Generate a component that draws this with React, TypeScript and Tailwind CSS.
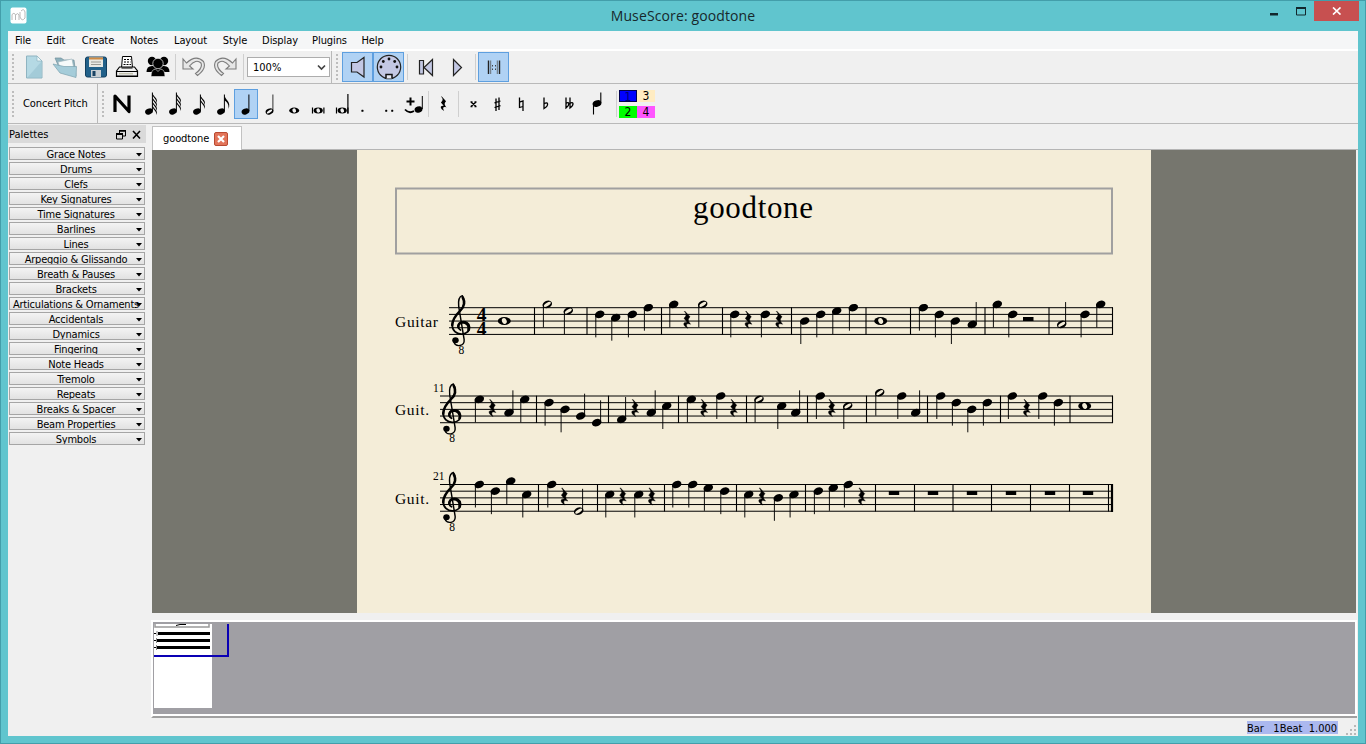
import React from "react";

type Kind = "q" | "h" | "w" | "r";
type Sym = [Kind, number, number?];

interface System {
  top: number;
  left: number;
  label: string;
  labelWidth: number;
  num?: string;
  bars: number[];
  syms: Sym[];
}

const systems: System[] = [
  {
    top: 307.7, left: 449, label: "Guitar", labelWidth: 43,
    bars: [534.5, 587, 661.5, 722.5, 791.5, 866, 910.5, 985, 1049, 1112.5],
    syms: [
      ["w", 504.3, 4], ["h", 547.3, -1], ["h", 568.3, 1],
      ["q", 599.7, 2], ["q", 615.7, 3], ["q", 632.3, 2], ["q", 648.3, 0],
      ["q", 673.7, -1], ["r", 687], ["h", 702.7, -1],
      ["q", 734.7, 2], ["r", 748.3], ["q", 765.3, 2], ["r", 779],
      ["q", 804.7, 4], ["q", 820.7, 2], ["q", 836.7, 1], ["q", 853.3, 0],
      ["w", 880.7, 4],
      ["q", 923.3, 0], ["q", 939.3, 2], ["q", 955.3, 4], ["q", 972.3, 5],
      ["q", 997.3, -1], ["q", 1012.7, 2],
      ["h", 1061.7, 5], ["q", 1085, 2], ["q", 1100.7, -1],
    ],
  },
  {
    top: 396, left: 440, label: "Guit.", labelWidth: 34, num: "11",
    bars: [536.5, 608.5, 678.5, 746.5, 807.5, 866.5, 927.5, 1000.5, 1070, 1112.5],
    syms: [
      ["q", 479.3, 1], ["r", 492.3], ["q", 509, 5], ["q", 524.7, 1],
      ["q", 549, 2], ["q", 565, 4], ["q", 580.7, 6], ["q", 596.7, 8],
      ["q", 621.7, 7], ["r", 635], ["q", 651.3, 5], ["q", 666.7, 3],
      ["q", 691.3, 1], ["r", 704], ["q", 720.7, 0], ["r", 733.7],
      ["h", 759, 1], ["q", 781.7, 3], ["q", 795.7, 5],
      ["q", 820.3, 0], ["r", 831.7], ["h", 847.7, 3],
      ["h", 879.7, -1], ["q", 901.7, 0], ["q", 915.7, 5],
      ["q", 940.7, 0], ["q", 956.3, 2], ["q", 971.7, 4], ["q", 987.3, 2],
      ["q", 1012.3, 0], ["r", 1026.7], ["q", 1042.7, 0], ["q", 1058.3, 2],
      ["w", 1084.7, 3],
    ],
  },
  {
    top: 484.5, left: 440, label: "Guit.", labelWidth: 34, num: "21",
    bars: [538.5, 597.5, 664.5, 736.5, 805.5, 875.5, 914.5, 953, 991.5, 1030.5, 1069.5, 1108.5],
    syms: [
      ["q", 479.3, 0], ["q", 495.3, 2], ["q", 510.7, -1], ["q", 526.7, 3],
      ["q", 551.7, 0], ["r", 564.3], ["h", 578.7, 8],
      ["q", 609.7, 3], ["r", 622.7], ["q", 638.7, 3], ["r", 651.7],
      ["q", 676.7, 0], ["q", 692.7, 0], ["q", 708.3, 1], ["q", 724.7, 2],
      ["q", 748.7, 3], ["r", 762], ["q", 778.3, 4], ["q", 794, 3],
      ["q", 818.3, 2], ["q", 833.3, 1], ["q", 848.3, 0], ["r", 861.7],
    ],
  },
];

const STEP = 3.33;

const REST = "M-2.4 -9.6 L3.2 -3.4 C.8 -.8 .9 .8 3.8 4.4 C.2 3 -2 4.2 .8 8.6 C-4.8 5.6 -4.6 1.6 .2 2.2 L-3.2 -2 C-.4 -4.4 -.4 -6.4 -2.8 -9.2 Z";

function Note({ sym, top }: { sym: Sym; top: number }) {
  const [kind, x, step = 0] = sym;
  if (kind === "r") {
    return <path transform={`translate(${x} ${top + 12.4}) scale(.95)`} d={REST} stroke="#000" strokeWidth=".4" />;
  }
  const y = top + step * STEP;
  if (kind === "w") {
    return (
      <g transform={`translate(${x} ${y})`}>
        <ellipse rx="6.5" ry="4" />
        <ellipse rx="2.3" ry="3" transform="rotate(-25)" fill="#f4edd8" />
      </g>
    );
  }
  const up = step > 4;
  const sx = x + (up ? 3.9 : -3.9);
  return (
    <g>
      <ellipse cx={x} cy={y} rx="4.9" ry="3.6" transform={`rotate(-22 ${x} ${y})`} />
      {kind === "h" && (
        <ellipse cx={x} cy={y} rx="4" ry="1.5" transform={`rotate(-32 ${x} ${y})`} fill="#f4edd8" />
      )}
      <path d={`M${sx} ${y}V${y + (up ? -22.3 : 23)}`} stroke="#000" strokeWidth=".95" />
    </g>
  );
}

function Clef({ x, top }: { x: number; top: number }) {
  return (
    <g transform={`translate(${x - 0.7} ${top - 13}) scale(.36 .3333)`} fill="none" stroke="#000" strokeLinecap="round">
      <path strokeWidth="4" d="M9 143C14 158 39 156 37 134L22 36C20 16 25 5 32 3C40 13 38 32 29 45" />
      <path strokeWidth="7" d="M33 8C41 24 36 38 26 48C13 62 4 74 4 92" />
      <path strokeWidth="5" d="M4 88C3 108 16 119 31 118C46 117 53 107 52 97C51 84 40 79 31 81C19 84 17 100 27 106" />
      <path strokeWidth="7" d="M49 106C53 92 43 83 32 83C24 84 20 91 21 97" />
      <circle cx="13" cy="137" r="9" fill="#000" stroke="none" />
    </g>
  );
}

function Score() {
  return (
    <svg width="794" height="463" viewBox="357 150 794 463" fontFamily="'Liberation Serif', serif" className="block bg-[#f4edd8]">
      <rect x="396" y="188.5" width="716" height="65" fill="none" stroke="#a0a0a0" strokeWidth="2" />
      <text x="693" y="218.3" fontSize="31" textLength="120">goodtone</text>
      {systems.map((s, i) => (
        <g key={i}>
          {[0, 1, 2, 3, 4].map((n) => (
            <path key={n} d={`M${s.left} ${s.top + n * 6.68}H1113`} stroke="#000" strokeWidth="1" />
          ))}
          {s.bars.map((b) => (
            <path key={b} d={`M${b} ${s.top - 0.3}V${s.top + 27}`} stroke="#000" strokeWidth="1.1" />
          ))}
          <Clef x={i === 0 ? 451.5 : 442.5} top={s.top} />
          <text x="395" y={s.top + 19.4} fontSize="15.5" textLength={s.labelWidth}>{s.label}</text>
          <text x={i === 0 ? 458.5 : 449.3} y={s.top + 46} fontSize="11.500">8</text>
          {s.num && <text x="433" y={s.top - 4.5} fontSize="11.5" textLength="11.5">{s.num}</text>}
          {s.syms.map((n, k) => <Note key={k} sym={n} top={s.top} />)}
        </g>
      ))}
      <text fontSize="19.5" fontWeight="bold">
        <tspan x="476.8" y="321">4</tspan>
        <tspan x="476.8" y="334.500">4</tspan>
      </text>
      <rect x="1023" y="317" width="10.5" height="4" />
      {[894, 933, 972, 1011, 1050, 1088].map((x) => (
        <rect key={x} x={x - 5.2} y="491" width="10.4" height="4" />
      ))}
      <path d="M1112 484V512" stroke="#000" strokeWidth="2.2" />
    </svg>
  );
}

function Sep({ w }: { w: string }) {
  return (
    <div className={`flex h-[26px] shrink-0 justify-center ${w}`}>
      <div className="w-px bg-[#cfcfcf]" />
    </div>
  );
}

function Handle({ w }: { w: string }) {
  return (
    <div className={`flex shrink-0 flex-col items-start gap-[2px] pl-[4px] ${w}`}>
      {[0, 1, 2, 3, 4, 5, 6].map((n) => <div key={n} className="size-[2px] bg-[#bdbdbd]" />)}
    </div>
  );
}

function Cell({ children, on, small, w }: { children?: React.ReactNode; on?: boolean; small?: boolean; w?: string }) {
  const size = w ?? (small ? "h-[30px] w-[24px]" : "h-[30px] w-[31px]");
  return (
    <div className={`flex shrink-0 items-center justify-center ${size} ${on ? "border border-[#5e9fdf] bg-[#b0d2f4]" : ""}`}>
      {children}
    </div>
  );
}

function ToolNote({ flags = 0, half }: { flags?: number; half?: boolean }) {
  const cx = flags ? 11 : 11.5;
  return (
    <svg className="shrink-0" width="24" height="30" viewBox="0 0 24 30">
      <ellipse cx={cx} cy="22.500" rx="4" ry="2.9" transform={`rotate(-22 ${cx} 22.5)`} />
      {half && <ellipse cx={cx} cy="22.500" rx="3.1" ry="1.2" transform={`rotate(-32 ${cx} 22.5)`} fill="#f0f0f0" />}
      <path d={`M${cx + 3.4} 22V${flags > 2 ? 3.5 : 5.5}`} stroke="#000" strokeWidth={half ? 0.8 : 1} />
      {Array.from({ length: flags }, (_, i) => (
        <path
          key={i}
          transform={`translate(0 ${(flags > 2 ? -2 : 0) + i * 4})`}
          d={flags === 1 ? "M14.4 6C15 11 21.500 12.500 18.500 20C19 15 17 13 14.400 11.500Z" : "M14.400 6C15 9.500 20.500 11 18.600 16C18.600 12.800 16.500 11.500 14.400 8.500Z"}
        />
      ))}
    </svg>
  );
}

function WholeNote({ bars = 0 }: { bars?: number }) {
  return (
    <svg className="shrink-0" width="24" height="30" viewBox="0 0 24 30">
      <ellipse cx="12.200" cy="21.500" rx={bars ? 4.6 : 5} ry="3" />
      <ellipse cx="12.200" cy="21.500" rx="1.8" ry="2.2" transform="rotate(-20 12.2 21.5)" fill="#f0f0f0" />
      {bars > 0 && <path d="M6.500 18.500V24.500M17.900 18.500V24.500" stroke="#000" strokeWidth="1.200" />}
      {bars > 1 && <path d="M17.900 5V24.500" stroke="#000" strokeWidth="1.200" />}
    </svg>
  );
}

function Glyph({ d, fill = "none", sw = 1 }: { d: string; fill?: string; sw?: number }) {
  return (
    <svg className="shrink-0" width="24" height="30" viewBox="0 0 24 30">
      <path d={d} fill={fill} stroke="#000" strokeWidth={sw} />
    </svg>
  );
}

const palettes = [
  "Grace Notes", "Drums", "Clefs", "Key Signatures", "Time Signatures", "Barlines", "Lines",
  "Arpeggio & Glissando", "Breath & Pauses", "Brackets", "Articulations & Ornaments", "Accidentals",
  "Dynamics", "Fingering", "Note Heads", "Tremolo", "Repeats", "Breaks & Spacer", "Beam Properties", "Symbols",
];

const menus: [string, string][] = [
  ["File", "w-[30px]"], ["Edit", "w-[36px]"], ["Create", "w-[48px]"], ["Notes", "w-[44px]"], ["Layout", "w-[49px]"],
  ["Style", "w-[40px]"], ["Display", "w-[50px]"], ["Plugins", "w-[49px]"], ["Help", "w-[37px]"],
];

function TitleBar() {
  return (
    <div className="flex h-[30px] shrink-0 items-start">
      <div className="flex w-[502px] pt-[6px] pl-[9px]">
        <svg width="17" height="17" viewBox="0 0 17 17">
          <rect x=".5" y=".5" width="16" height="16" rx="2" fill="#fff" />
          <path d="M2 13V7.5Q4 5 5.500 7.500V13M5.500 8Q8 5 9 8V13M10 5V10Q12 15 15 11V5Q14 1 11 4" fill="none" stroke="#b9b9b9" />
        </svg>
      </div>
      <div className="flex-1 pt-[5px] text-center text-[14px] leading-[20px] tracking-[0.12px] text-[#17282c] [font-family:'Open_Sans',sans-serif]">
        MuseScore: goodtone
      </div>
      <div className="flex w-[502px] justify-end pr-[6px]">
        <svg width="46" height="30" viewBox="1262 1 46 30">
          <rect x="1270" y="13" width="8" height="2.500" fill="#12282d" />
          <path d="M1296.500 7.500H1305.500V15H1296.500Z" fill="none" stroke="#12282d" />
          <path d="M1296 8H1306" stroke="#12282d" strokeWidth="2" />
        </svg>
        <div className="ml-[6px] flex h-[20px] w-[45px] items-center justify-center bg-[#c75050]">
          <svg width="10" height="8" viewBox="0 0 10 8"><path d="M1 .5L8.500 7.500M8.500 .5L1 7.500" stroke="#fff" strokeWidth="1.700" /></svg>
        </div>
      </div>
    </div>
  );
}

function MainToolbar() {
  return (
    <div className="flex h-[33px] shrink-0 items-center border-b border-[#b9b9b9]">
      <Handle w="w-[10px]" />
      <Cell>
        <svg width="26" height="26" viewBox="0 0 26 26">
          <path d="M5.500 2H16L21 7V24H5.500Z" fill="#b5d9e4" stroke="#8fb4c1" />
          <path d="M6 24L20 8V24Z" fill="#98c2d0" opacity=".6" />
          <path d="M16 2V7H21Z" fill="#edf8fa" stroke="#8fb4c1" strokeWidth=".7" />
        </svg>
      </Cell>
      <Cell>
        <svg width="26" height="26" viewBox="0 0 26 26">
          <path d="M3 4H9L12 6H22L24 22L9 18Z" fill="#8db1bd" stroke="#718f9b" strokeWidth=".7" />
          <path d="M6 8L20 5L22 15L9 17Z" fill="#f6fafa" stroke="#a4b9c0" strokeWidth=".7" />
          <path d="M1 10L12 12.500L24.500 12.500L24 23.500L8 19Z" fill="#a5ccd9" stroke="#7ba2af" strokeWidth=".7" />
        </svg>
      </Cell>
      <Cell>
        <svg width="24" height="24" viewBox="0 0 24 24">
          <rect x="1.500" y="2" width="21" height="20" rx="2" fill="#22618a" stroke="#123f5f" />
          <rect x="5" y="2.500" width="14" height="9.500" fill="#e9e9e4" />
          <rect x="5" y="2.500" width="14" height="2" fill="#d08b43" />
          <path d="M7 7H17M7 9.500H17" stroke="#9a9a94" />
          <rect x="7" y="15" width="10" height="7" fill="#c9d0d4" />
          <rect x="8.500" y="16" width="3" height="5" fill="#1b4464" />
        </svg>
      </Cell>
      <Cell>
        <svg width="24" height="24" viewBox="0 0 24 24">
          <path d="M6.500 13L7.500 1.500H16.500L17.500 13" fill="#fff" stroke="#000" />
          <path d="M9 4.500H15.500M9 7H15.500M8.500 9.500H16" stroke="#000" strokeDasharray="2 1" />
          <path d="M1.500 16L4.500 12H19.500L22.500 16V21.500H1.500Z" fill="#f1f1f1" stroke="#000" strokeWidth="1.200" />
          <path d="M1.500 16.500H22.500M2 21H22" stroke="#000" strokeWidth="1.200" />
          <path d="M4 18.700H18" stroke="#c3c3b0" strokeWidth="1.500" />
          <path d="M6.500 13H17.500" stroke="#000" />
        </svg>
      </Cell>
      <Cell>
        <svg width="24" height="24" viewBox="0 0 24 24">
          <circle cx="6" cy="6" r="4.200" /><circle cx="18" cy="6" r="4.200" />
          <path d="M.5 17Q.5 11 6 11H18Q23.500 11 23.500 17Z" />
          <circle cx="12" cy="8.500" r="5.200" stroke="#f0f0f0" strokeWidth=".7" />
          <path d="M5 21.500Q5 14.500 9.500 14L12 16.500L14.500 14Q19 14.500 19 21.500Z" stroke="#f0f0f0" strokeWidth=".6" />
        </svg>
      </Cell>
      <Sep w="w-[5px]" />
      <Cell>
        <svg width="26" height="24" viewBox="0 0 26 24">
          <path d="M2 4V14H12L8.500 11Q15 3.500 20 8Q22 13 14.500 18.500L16.500 20.500Q26 13.500 22.500 6.500Q15-1 5.500 8Z" fill="#e6e6e6" stroke="#7c7c7c" strokeWidth="1.100" />
        </svg>
      </Cell>
      <Cell>
        <svg width="26" height="24" viewBox="0 0 26 24">
          <path d="M24 4V14H14L17.500 11Q11 3.500 6 8Q4 13 11.500 18.500L9.500 20.500Q0 13.500 3.500 6.500Q11-1 20.500 8Z" fill="#e6e6e6" stroke="#7c7c7c" strokeWidth="1.100" />
        </svg>
      </Cell>
      <Sep w="w-[7px]" />
      <div className="flex h-[20px] w-[83px] shrink-0 items-center justify-between border border-[#adadad] bg-white pr-[3px] pl-[5px] text-[11px]">
        <span className="pt-[2px]">100%</span>
        <svg width="9" height="7" viewBox="0 0 9 7"><path d="M1 1.500L4.500 5L8 1.500" fill="none" stroke="#444" strokeWidth="1.700" /></svg>
      </div>
      <div className="ml-[1px] flex h-full items-center border-l border-[#b9b9b9]">
        <Handle w="w-[10px]" />
      </div>
      <Cell on>
        <svg width="20" height="24" viewBox="0 0 20 24"><path d="M3.500 7.500H9L16 2.500V22L9 17H3.500Z" fill="#c3c8e4" stroke="#222" strokeWidth="1.200" /></svg>
      </Cell>
      <Cell on>
        <svg className="shrink-0" width="26" height="26" viewBox="0 0 26 26">
          <circle cx="13" cy="13" r="11.700" fill="#c3c8e4" stroke="#222" strokeWidth="1.200" />
          <g fill="#111"><circle cx="5" cy="13" r="1.400" /><circle cx="7.300" cy="7.500" r="1.400" /><circle cx="13" cy="5" r="1.400" /><circle cx="18.700" cy="7.500" r="1.400" /><circle cx="21" cy="13" r="1.400" /></g>
          <path d="M10 24.500V20.500H16V24.500" fill="#e5e8f5" stroke="#111" strokeWidth="1.500" />
        </svg>
      </Cell>
      <Sep w="w-[6px]" />
      <Cell>
        <svg width="18" height="20" viewBox="0 0 18 20"><path d="M2.500 3.500H6.500V17H2.500ZM15.500 2.500V18.500L7 10.500Z" fill="#c3c8e4" stroke="#222" strokeWidth="1.200" /></svg>
      </Cell>
      <Cell>
        <svg width="18" height="20" viewBox="0 0 18 20"><path d="M5.500 2.500V18.500L13.500 10.500Z" fill="#c3c8e4" stroke="#222" strokeWidth="1.200" /></svg>
      </Cell>
      <Sep w="w-[6px]" />
      <Cell on>
        <svg width="16" height="16" viewBox="0 0 16 16">
          <path d="M2.500 1.500V15M13.500 1.500V15" stroke="#222" strokeWidth="1.400" />
          <path d="M4.700 1.500V15M11.300 1.500V15" stroke="#555" strokeWidth=".8" />
          <path d="M6.500 6V7.500M6.500 9.500V11M9.500 6V7.500M9.500 9.500V11" stroke="#444" />
        </svg>
      </Cell>
    </div>
  );
}

function NoteToolbar() {
  return (
    <div className="flex h-[40px] shrink-0 items-center border-b border-[#b9b9b9]">
      <Handle w="w-[15px]" />
      <div className="w-[74px] shrink-0 pt-[2px] text-[11px] tracking-[-0.1px]">Concert Pitch</div>
      <div className="flex h-full w-[9px] shrink-0 items-center border-l border-[#b9b9b9]">
        <Handle w="w-[9px]" />
      </div>
      <Cell w="h-[30px] w-[32px]">
        <svg width="20" height="22" viewBox="0 0 20 22"><path d="M3 19V3L17 18.500V2.500" fill="none" stroke="#000" strokeWidth="3.200" strokeLinejoin="round" /></svg>
      </Cell>
      <Cell small><ToolNote flags={4} /></Cell>
      <Cell small><ToolNote flags={3} /></Cell>
      <Cell small><ToolNote flags={2} /></Cell>
      <Cell small><ToolNote flags={1} /></Cell>
      <Cell small on><ToolNote /></Cell>
      <Cell small><ToolNote half /></Cell>
      <Cell small><WholeNote /></Cell>
      <Cell small><WholeNote bars={1} /></Cell>
      <Cell small><WholeNote bars={2} /></Cell>
      <Cell small><Glyph d="M7.700 21H9.200V22.500H7.700Z" fill="#000" sw={0.5} /></Cell>
      <Cell small><Glyph d="M7.500 21H9V22.500H7.500ZM13.500 21H15V22.500H13.500Z" fill="#000" sw={0.5} /></Cell>
      <Cell small>
        <svg width="24" height="30" viewBox="0 0 24 30">
          <ellipse cx="16.500" cy="20.500" rx="4" ry="3.100" transform="rotate(-20 16.500 20.500)" />
          <path d="M20.300 20V7" stroke="#000" />
          <path d="M8.500 8.500V16.500M4.500 12.500H12.500" stroke="#000" strokeWidth="2" />
          <path d="M3 20.500Q7 25 12 22" fill="none" stroke="#000" strokeWidth="1.800" />
        </svg>
      </Cell>
      <Sep w="w-[5px]" />
      <Cell small>
        <svg width="24" height="30" viewBox="0 0 24 30"><path transform="translate(12.500 15) scale(.8)" d={REST} /></svg>
      </Cell>
      <Sep w="w-[6px]" />
      <Cell small><Glyph d="M10 13L15 17.500M15 13L10 17.500M9.500 13H11.500M13.500 13H15.500M9.500 17.500H11.500M13.500 17.500H15.500" sw={1.5} /></Cell>
      <Cell small><Glyph d="M11 9.500V22M14 8.500V21M9.500 13.800L15.500 12M9.500 18.500L15.500 16.700" sw={1.3} /></Cell>
      <Cell small><Glyph d="M10.500 8.500V18.500L14 17.500M14 22V12L10.500 13.200" sw={1.3} /></Cell>
      <Cell small><Glyph d="M11 8.500V19.500C16.500 16 15 12 11 15" sw={1.3} /></Cell>
      <Cell small><Glyph d="M9 8.500V19C13 16 12.500 12 9 14.500M13 8.500V19C17.500 16 16.500 12 13 14.500" sw={1.3} /></Cell>
      <Cell w="h-[30px] w-[32px]">
        <svg width="24" height="30" viewBox="0 0 24 30">
          <ellipse cx="12" cy="14.500" rx="4.500" ry="3.300" transform="rotate(-20 12 14.500)" />
          <path d="M15.800 14V3.500M8.500 15V25.500" stroke="#000" strokeWidth="1.100" />
        </svg>
      </Cell>
      <Sep w="w-[6px]" />
      <div className="grid w-[36px] shrink-0 grid-cols-2 gap-y-[4px] text-center text-[12px] leading-[13px]">
        <div className="h-[12px] border border-[#000050] bg-[#0000ff] leading-[12px] text-[#000070]">1</div>
        <div className="h-[12px] bg-[#ffecc2]">3</div>
        <div className="h-[12px] bg-[#00ff00]">2</div>
        <div className="h-[12px] bg-[#ff55ff]">4</div>
      </div>
    </div>
  );
}

function Palettes() {
  return (
    <div className="flex w-[138px] shrink-0 flex-col pt-[1px]">
      <div className="flex h-[18px] items-center justify-between bg-[#dadada] pr-[5px] pl-[1px] text-[11px]">
        <span className="pt-[2px]">Palettes</span>
        <svg width="26" height="12" viewBox="0 0 26 12" className="mt-[2px]">
          <path d="M4.500 4V1.500H10.500V7H8M1.500 5H7.500V10H1.500Z" fill="none" stroke="#000" />
          <path d="M4 1.800H11M1 5H8" stroke="#000" strokeWidth="1.800" />
          <path d="M18 2L25 9.500M25 2L18 9.500" stroke="#000" strokeWidth="1.600" />
        </svg>
      </div>
      <div className="flex flex-col gap-[2px] pt-[4px] pr-px pl-px">
        {palettes.map((p) => (
          <div key={p} className="flex h-[13px] items-center border border-[#a5a5a5] bg-linear-to-b from-[#f3f3f3] to-[#e2e2e2]">
            <div className="flex h-[11px] w-[132px] justify-center overflow-hidden text-[11px] leading-[14px] tracking-[-0.2px] whitespace-nowrap">{p}</div>
            <svg className="-ml-[6px] mt-[3px] shrink-0" width="6" height="4" viewBox="0 0 6 4"><path d="M0 0H6L3 3.500Z" /></svg>
          </div>
        ))}
      </div>
    </div>
  );
}

function Navigator() {
  return (
    <div className="mt-[7px] mr-px -ml-px h-[98px] border-t-2 border-l-2 border-white border-b-[#a0a0a0] border-b-2">
      <div className="h-[94px] border-r-2 border-b-2 border-white bg-[#a09fa4]">
        <svg width="90" height="90" viewBox="153 622 90 90" className="block">
          <rect x="154" y="624" width="58" height="84" fill="#fff" />
          <path d="M155 624V627H209V624" fill="none" stroke="#999" strokeWidth="1.500" />
          <path d="M176 625.500L180 624.500H186" stroke="#000" fill="none" />
          <path d="M158 633.500H210M157 640.500H210M157 647.500H210" stroke="#000" strokeWidth="3" />
          <path d="M154 633.500H156M154 640.500H156M154 647.500H156" stroke="#000" />
          <path d="M157 631V636M156.500 638V643M156.500 645V650" stroke="#555" strokeWidth=".7" />
          <path d="M154 656H228V624" fill="none" stroke="#0a00b4" strokeWidth="2" />
        </svg>
      </div>
    </div>
  );
}

export default function App() {
  return (
    <div className="flex h-[744px] w-[1366px] flex-col overflow-hidden border border-[#439eaa] bg-[#60c5ce] text-black [font-family:'DejaVu_Sans_Condensed','DejaVu_Sans',sans-serif]">
      <TitleBar />
      <div className="mx-[7px] mb-[7px] flex min-h-0 flex-1 flex-col bg-[#f0f0f0]">
        <div className="flex h-[20px] shrink-0 items-center border-b-2 border-white bg-[#f5f6f7] pt-[2px] text-[11px] tracking-[-0.1px]">
          {menus.map(([m, w]) => <div key={m} className={`shrink-0 text-center ${w}`}>{m}</div>)}
        </div>
        <MainToolbar />
        <NoteToolbar />
        <div className="flex min-h-0 flex-1">
          <Palettes />
          <div className="ml-[6px] flex min-w-0 flex-1 flex-col">
            <div className="flex h-[26px] shrink-0 items-end">
              <div className="flex h-[24px] w-[90px] items-center border border-b-0 border-[#c2c2c2] bg-white pl-[10px] text-[11px] tracking-[-0.1px]">
                <span className="pt-[2px]">goodtone</span>
                <svg className="ml-[5px]" width="14" height="14" viewBox="0 0 14 14">
                  <rect x=".5" y=".5" width="13" height="13" rx="1.500" fill="#e27459" stroke="#b94a31" />
                  <path d="M4 4L10 10M10 4L4 10" stroke="#fff" strokeWidth="2.200" />
                </svg>
              </div>
              <div className="h-px flex-1 bg-[#b5b5b5]" />
            </div>
            <div className="mr-[2px] flex h-[463px] shrink-0 bg-[#76766e] pl-[205px]">
              <Score />
            </div>
            <Navigator />
            <div className="flex flex-1 items-start justify-end pt-[3px] pr-[2px]">
              <div className="flex h-[13px] w-[91px] items-center justify-between bg-[#abb8ef] pt-px text-[11px] leading-[13px] whitespace-pre">Bar   1Beat  1.000</div>
              <svg className="ml-[7px] mt-[4px]" width="11" height="11" viewBox="0 0 11 11" fill="#b8b8b8">
                <path d="M9 0h2v2h-2zM9 4h2v2h-2zM5 4h2v2h-2zM9 8h2v2h-2zM5 8h2v2h-2zM1 8h2v2h-2z" />
              </svg>
            </div>
          </div>
        </div>
      </div>
    </div>
  );
}
